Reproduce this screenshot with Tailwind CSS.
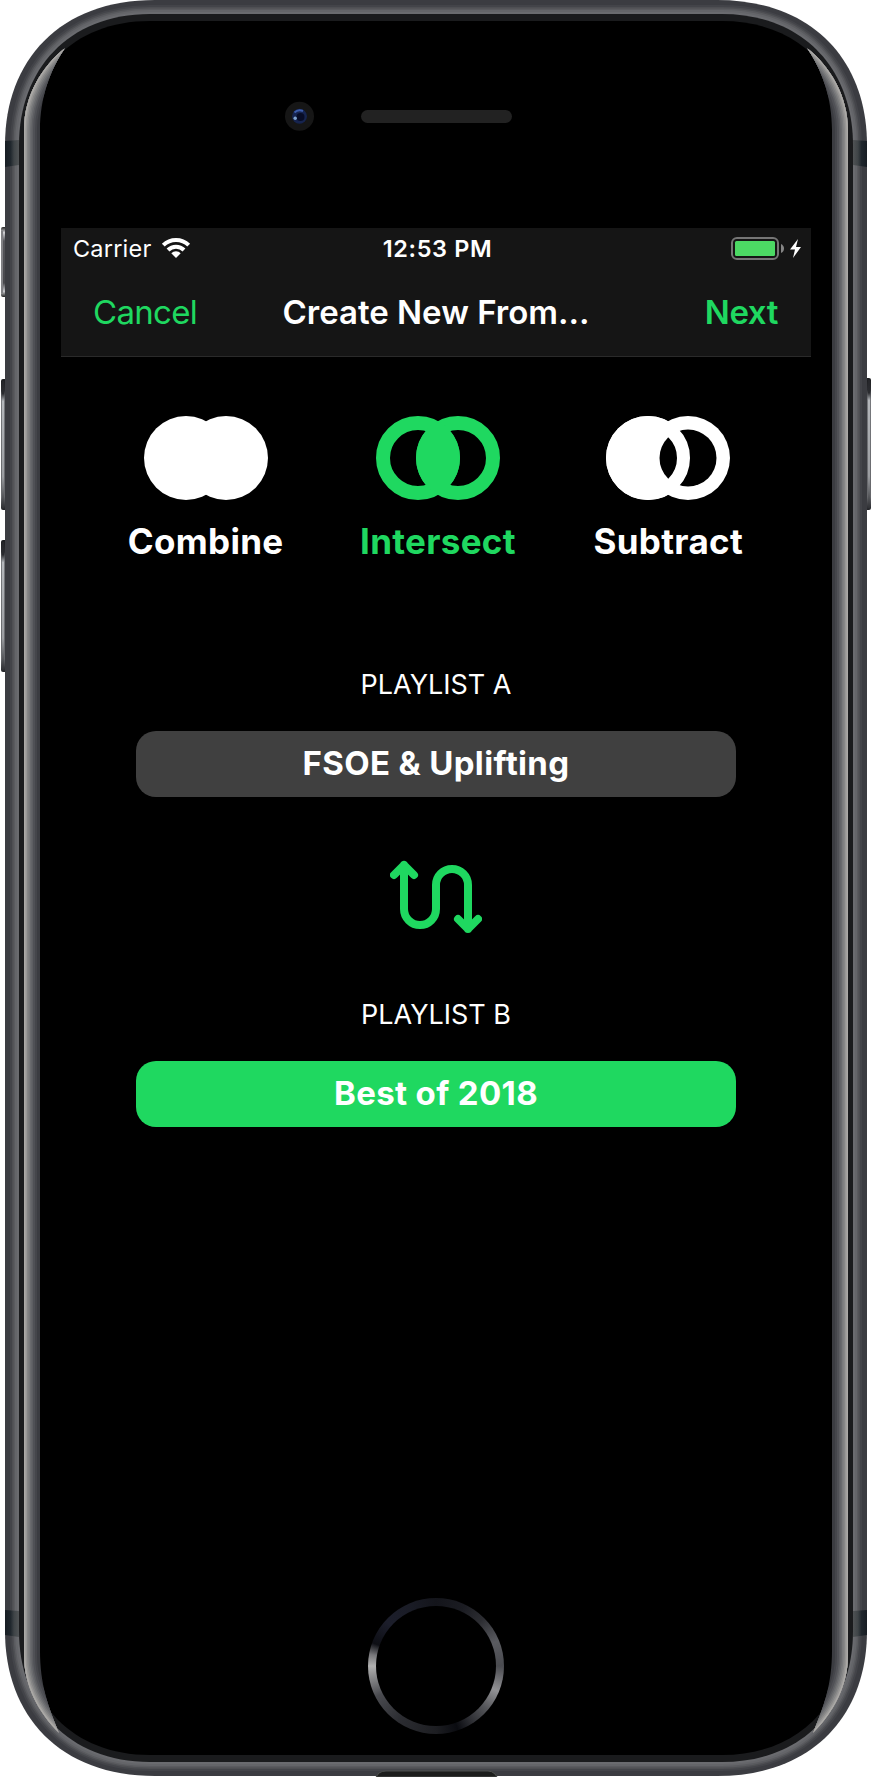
<!DOCTYPE html>
<html lang="en">
<head>
<meta charset="utf-8">
<title>Create New From…</title>
<script src="https://cdn.jsdelivr.net/npm/@tailwindcss/browser@4"></script>
</head>
<body class="bg-white font-['Inter',sans-serif] text-white">
<div class="relative h-[1777px] w-[871px] overflow-hidden">
  <!-- device body -->
  <svg class="absolute inset-0" width="871" height="1777" viewBox="0 0 871 1777">
    <defs>
      <linearGradient id="btn" x1="0" y1="0" x2="0" y2="1">
        <stop offset="0" stop-color="#1c1d20"/><stop offset=".09" stop-color="#2b2c30"/><stop offset=".16" stop-color="#77797d"/><stop offset=".9" stop-color="#66676b"/><stop offset="1" stop-color="#222327"/>
      </linearGradient>
      <linearGradient id="shine" x1="0" y1="0" x2="0" y2="1">
        <stop offset="0" stop-color="#25262a"/><stop offset=".1" stop-color="#2b2c30"/><stop offset=".16" stop-color="#b4b7bb"/><stop offset=".75" stop-color="#9b9da1"/><stop offset="1" stop-color="#303135"/>
      </linearGradient>
      <linearGradient id="mute" x1="0" y1="0" x2="0" y2="1">
        <stop offset="0" stop-color="#222"/><stop offset=".08" stop-color="#d0d0d4"/><stop offset=".2" stop-color="#55555a"/><stop offset=".8" stop-color="#47474b"/><stop offset=".92" stop-color="#c8c8cc"/><stop offset="1" stop-color="#222"/>
      </linearGradient>
      <linearGradient id="band" x1="0" x2="1" y1="0" y2="0">
        <stop offset="0" stop-color="#171d23"/><stop offset=".4" stop-color="#20272d"/><stop offset=".65" stop-color="#3f4447"/><stop offset="1" stop-color="#505355"/>
      </linearGradient>
      <path id="outer" d="M5 145C5 60 60 0 155 0H717C812 0 867 60 867 145V1631C867 1716 812 1776 717 1776H155C60 1776 5 1716 5 1631Z"/>
      <path id="inner" d="M19 145C19 70 68 14 150 14H722C804 14 853 70 853 145V1631C853 1706 804 1762 722 1762H150C68 1762 19 1706 19 1631Z"/>
      <path id="glass" d="M24 145C24 74 72 21 150 21H722C800 21 848 74 848 145V1631C848 1702 800 1755 722 1755H150C72 1755 24 1702 24 1631Z"/>
      <path id="edge" d="M64 48C42 66 24 96 24 130V1655C24 1686 38 1712 59 1733"/>
      <clipPath id="crescent"><path d="M65 48C42 66 24 96 24 130V1655C24 1686 38 1712 59 1733C48 1706 40 1685 40 1650V130C40 98 50 70 65 48Z"/></clipPath>
      <clipPath id="body"><use href="#outer"/></clipPath>
      <path id="side" d="M5 141L19 140V165L5 167ZM5 1610L19 1611V1637L5 1635Z" fill="url(#band)"/>
      <g id="glare" clip-path="url(#crescent)" fill="none">
        <rect x="24" y="40" width="45" height="1700" fill="#3b3c41"/>
        <use href="#edge" stroke="#45464b" stroke-width="26"/>
        <use href="#edge" stroke="#505156" stroke-width="22"/>
        <use href="#edge" stroke="#5d5e62" stroke-width="18"/>
        <use href="#edge" stroke="#6a6b6e" stroke-width="15"/>
        <use href="#edge" stroke="#78797b" stroke-width="12"/>
        <use href="#edge" stroke="#878787" stroke-width="9"/>
        <use href="#edge" stroke="#989796" stroke-width="6"/>
        <use href="#edge" stroke="#aba9a6" stroke-width="3"/>
      </g>
    </defs>
    <!-- side buttons -->
    <rect x="1" y="227" width="8" height="70" rx="2" fill="url(#mute)"/>
    <rect x="1" y="231" width="2" height="62" fill="#808084"/>
    <g>
      <rect x="1" y="379" width="9" height="131" rx="2" fill="url(#btn)"/><rect x="2" y="381" width="2" height="127" fill="url(#shine)"/>
      <rect x="1" y="540" width="9" height="132" rx="2" fill="url(#btn)"/><rect x="2" y="542" width="2" height="128" fill="url(#shine)"/>
      <rect x="862" y="378" width="9" height="132" rx="2" fill="url(#btn)"/><rect x="868" y="380" width="2" height="128" fill="url(#shine)"/>
    </g>
    <!-- metal frame -->
    <g clip-path="url(#body)">
      <rect x="5" y="0" width="862" height="1776" fill="#3b3c41"/>
      <g fill="none">
        <use href="#inner" stroke="#434449" stroke-width="18"/>
        <use href="#inner" stroke="#4e4f53" stroke-width="14"/>
        <use href="#inner" stroke="#5a5b5f" stroke-width="11"/>
        <use href="#inner" stroke="#646569" stroke-width="8"/>
        <use href="#inner" stroke="#6a6b6f" stroke-width="4"/>
      </g>
      <use href="#side"/>
      <use href="#side" transform="matrix(-1 0 0 1 872 0)"/>
    </g>
    <use href="#inner" fill="#1a1b1d"/>
    <use href="#glass" fill="#000"/>
    <use href="#glare"/>
    <use href="#glare" transform="matrix(-1 0 0 1 872 0)"/>
    <path d="M376 1777L379 1773Q382 1771 386 1771H488Q492 1771 495 1774L497 1777Z" fill="#1c1d1c" stroke="#4c4f4c" stroke-width="1"/>
    <!-- camera -->
    <circle cx="299.500" cy="116.300" r="14.500" fill="#161616"/>
    <circle cx="299.500" cy="116.300" r="7.500" fill="#16244f"/>
    <circle cx="300.500" cy="117" r="4" fill="#070c26"/>
    <path d="M294.500 112.500Q298 109 303 111" stroke="#3c5cab" stroke-width="2" fill="none"/>
    <circle cx="295.200" cy="118.300" r="1.700" fill="#7fa3cf"/>
    <!-- speaker -->
    <rect x="361" y="110" width="151" height="13" rx="6.500" fill="#222"/>
  </svg>

  <!-- screen -->
  <main class="relative ml-[61px] flex w-[750px] flex-col pt-[228px]">
    <header class="border-b border-[#2a2a2a] bg-[#151515]">
      <div class="grid h-10 grid-cols-3 items-center pl-[12px] pr-[9px] pt-px">
        <div class="flex items-center gap-[10px]">
          <span class="text-[23.5px] tracking-[0.2px]">Carrier</span>
          <svg class="mb-0.5" width="30" height="22" viewBox="0 0 30 22" fill="none" stroke="#fff" stroke-width="4">
            <path d="M2.300 8.200A18 18 0 0 1 27.700 8.200"/>
            <path d="M7 13A11.300 11.300 0 0 1 23 13"/>
            <path d="M10.300 16.300A6.600 6.600 0 0 1 19.700 16.300L15 21Z" fill="#fff" stroke="none"/>
          </svg>
        </div>
        <span class="text-center text-[23.5px] font-semibold tracking-[0.6px]">12:53 PM</span>
        <svg class="mb-0.5 justify-self-end" width="72" height="24" viewBox="730 236 72 24">
          <rect x="732" y="238" width="46" height="21" rx="5" fill="none" stroke="#757575" stroke-width="2"/>
          <rect x="735" y="241" width="40" height="15" rx="1.500" fill="#4cd964"/>
          <path d="M781 244Q784 245.500 784 248.500T781 253Z" fill="#858585"/>
          <path d="M798 239L790 249.500H795L793 258L801 247H796Z" fill="#fff"/>
        </svg>
      </div>
      <nav class="grid h-[88px] grid-cols-[1fr_auto_1fr] items-center px-[33px] pt-px text-[33px] text-[#1fd860]">
        <span class="-ml-px tracking-[-0.7px]">Cancel</span>
        <h1 class="font-semibold text-white">Create New From...</h1>
        <span class="text-right font-semibold tracking-[-0.4px]">Next</span>
      </nav>
    </header>

    <section class="ml-[29px] mt-[59px] grid w-[694px] grid-cols-3 text-center text-[35px] font-bold leading-[42px] tracking-[0.3px]">
      <div class="flex flex-col items-center gap-5">
        <svg width="124" height="84" viewBox="0 0 124 84" fill="#fff"><circle cx="42" cy="42" r="42"/><circle cx="82" cy="42" r="42"/></svg>
        <span>Combine</span>
      </div>
      <div class="flex flex-col items-center gap-5 pl-0.5 text-[#1fd860]">
        <svg width="124" height="84" viewBox="0 0 124 84" fill="none" stroke="#1fd860" stroke-width="14">
          <circle cx="42" cy="42" r="35"/><circle cx="82" cy="42" r="35"/>
          <path d="M62 5.100A42 42 0 0 1 62 78.900A42 42 0 0 1 62 5.100Z" fill="#1fd860" stroke="none"/>
        </svg>
        <span>Intersect</span>
      </div>
      <div class="flex flex-col items-center gap-5">
        <svg width="124" height="84" viewBox="0 0 124 84" fill="#fff">
          <circle cx="42" cy="42" r="42"/><circle cx="82" cy="42" r="42"/><circle cx="82" cy="42" r="28.500" fill="#000"/>
          <circle cx="42" cy="42" r="35.500" fill="none" stroke="#fff" stroke-width="13"/>
        </svg>
        <span>Subtract</span>
      </div>
    </section>

    <section class="flex flex-col items-center px-[75px] pt-[106px]">
      <span class="text-[27px] leading-[34px]">PLAYLIST A</span>
      <button class="mt-[29px] h-[66px] w-full rounded-[20px] bg-[#404040] text-[33px] font-bold tracking-[0.35px]">FSOE &amp; Uplifting</button>
      <svg class="mt-[60px]" width="92" height="76" viewBox="390 857 92 76" fill="none" stroke="#1fd860" stroke-width="8" stroke-linecap="round" stroke-linejoin="round">
        <path d="M394 875L404 865L414 875M404 865V909A16 16 0 0 0 436 909V885A16 16 0 0 1 468 885V929M458 919L468 929L478 919"/>
      </svg>
      <span class="mt-[65px] text-[27px] leading-[34px]">PLAYLIST B</span>
      <button class="mt-[29px] h-[66px] w-full rounded-[20px] bg-[#1fd860] text-[33px] font-bold tracking-[0.35px]">Best of 2018</button>
    </section>

    <!-- home button -->
    <div class="mt-[471px] flex size-[136px] items-center justify-center self-center rounded-full bg-[conic-gradient(#14151b_0deg,#1b1c22_25deg,#2c2d32_45deg,#5a5b60_68deg,#4a4b50_90deg,#929295_112deg,#55565a_130deg,#2c2d32_148deg,#0a0b10_161deg,#1d1e22_180deg,#2c2d32_215deg,#4a4b50_243deg,#b0b0b0_270deg,#77777a_280deg,#0d0e14_290deg,#1c1e2b_312deg,#1a1c26_335deg,#14151b_360deg)]">
      <div class="size-[120px] rounded-full bg-black"></div>
    </div>
  </main>
</div>
</body>
</html>
